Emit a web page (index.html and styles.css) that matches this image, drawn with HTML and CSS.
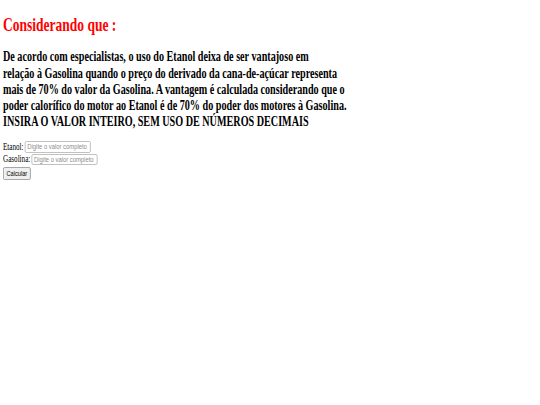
FILE: index.html
```html
<!DOCTYPE html>
<html lang="pt-BR">
<head>
    <meta charset="UTF-8">
    <meta name="viewport" content="width=device-width, initial-scale=1.0">
    <title>Etanol ou Gasolina</title>
    <link rel="stylesheet" href="styles.css">
</head>
<body>
    <h1 class="title">Considerando que :</h1>
    <p class="info">
        De acordo com especialistas, o uso do Etanol deixa de ser vantajoso em<br>
        relação à Gasolina quando o preço do derivado da cana-de-açúcar representa<br>
        mais de 70% do valor da Gasolina. A vantagem é calculada considerando que o<br>
        poder calorífico do motor ao Etanol é de 70% do poder dos motores à Gasolina.<br>
        INSIRA O VALOR INTEIRO, SEM USO DE NÚMEROS DECIMAIS
    </p>
    <form class="form" onsubmit="return false">
        <div class="row">
            <label for="etanol">Etanol:</label>
            <input type="text" id="etanol" placeholder="Digite o valor completo">
        </div>
        <div class="row">
            <label for="gasolina">Gasolina:</label>
            <input type="text" id="gasolina" placeholder="Digite o valor completo">
        </div>
        <button class="btn" type="button">Calcular</button>
    </form>
</body>
</html>
```

FILE: styles.css
```css
body {
    margin: 0;
    padding: 15px 0 0 3px;
    background-color: #ffffff;
    color: #000000;
    font-family: "Liberation Serif", "Times New Roman", serif;
}

/* the page is drawn narrow: each block is squeezed from its left edge */
.title,
.info,
.form {
    transform-origin: 0 0;
}

.title {
    margin: 0 0 13.3px 0;
    font-size: 18px;
    line-height: 20px;
    color: #ff0000;
    transform: scaleX(0.75);
}

.info {
    margin: 0 0 11px 0;
    font-size: 14.5px;
    line-height: 16.25px;
    font-weight: bold;
    white-space: nowrap;
    transform: scaleX(0.7);
}

.form {
    margin: 0;
    transform: scaleX(0.75);
}

.row {
    display: flex;
    align-items: center;
    gap: 2px;
    height: 12.5px;
    font-size: 9.5px;
}

.row input {
    width: 88px;
    height: 11.5px;
    box-sizing: border-box;
    padding: 0 1px 0 2px;
    border: 1px solid #b8b8b8;
    border-radius: 2px;
    font-family: "Liberation Sans", Arial, sans-serif;
    font-size: 7.8px;
}

.row input::placeholder {
    color: #8c8c8c;
}

.btn {
    display: block;
    margin-top: 1.5px;
    width: 37px;
    height: 13px;
    padding: 0;
    border: 1px solid #9a9a9a;
    border-radius: 2px;
    background-color: #efefef;
    font-family: "Liberation Sans", Arial, sans-serif;
    font-size: 7.5px;
    color: #000000;
}
```
